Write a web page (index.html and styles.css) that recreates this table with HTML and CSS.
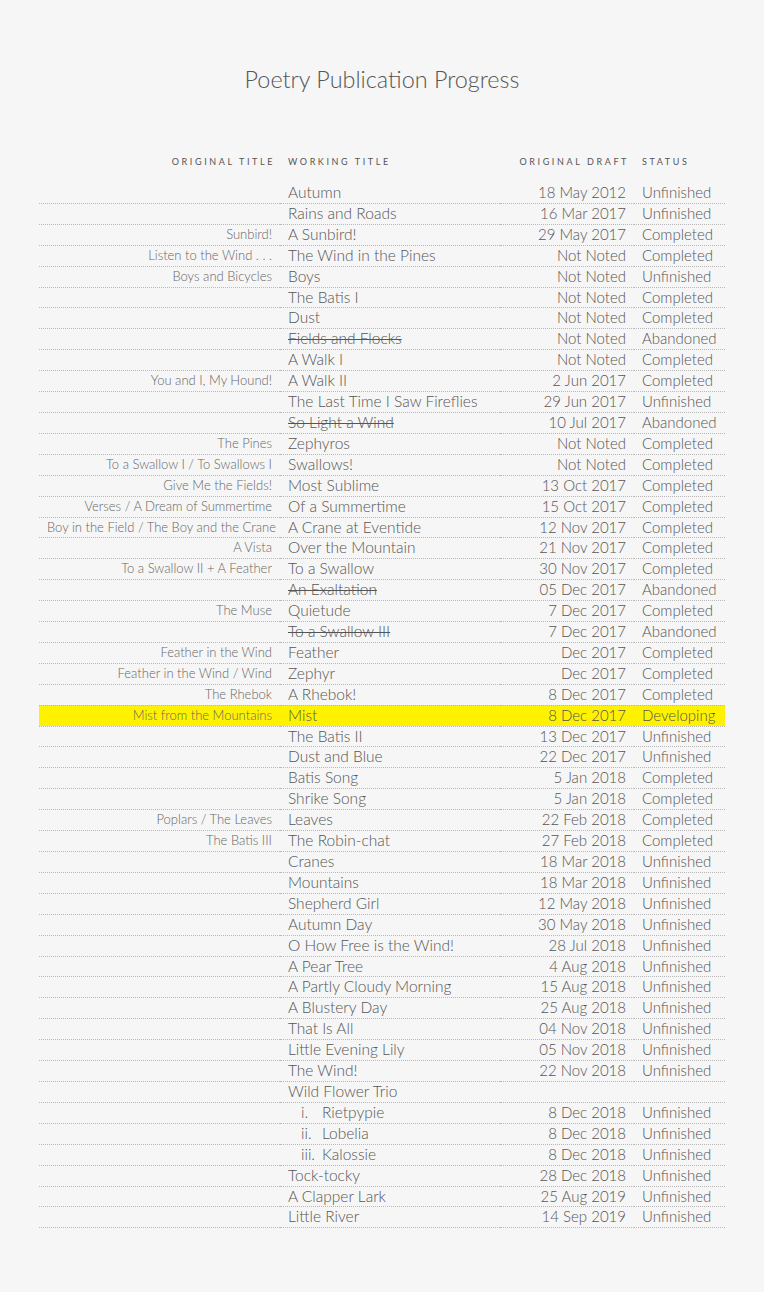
FILE: index.html
```html
<!DOCTYPE html>
<html lang="en">
<head>
<meta charset="utf-8">
<title>Poetry Publication Progress</title>
<link rel="stylesheet" href="styles.css">
</head>
<body>
<main class="page">
  <h1 class="title">Poetry Publication Progress</h1>
  <table class="progress">
    <colgroup>
      <col class="c-orig"><col class="c-work"><col class="c-date"><col class="c-status">
    </colgroup>
    <thead>
      <tr>
        <th class="orig">Original Title</th>
        <th class="work">Working Title</th>
        <th class="date">Original Draft</th>
        <th class="status">Status</th>
      </tr>
    </thead>
    <tbody>
      <tr><td class="orig"></td><td class="work">Autumn</td><td class="date">18 May 2012</td><td class="status">Unfinished</td></tr>
      <tr><td class="orig"></td><td class="work">Rains and Roads</td><td class="date">16 Mar 2017</td><td class="status">Unfinished</td></tr>
      <tr><td class="orig">Sunbird!</td><td class="work">A Sunbird!</td><td class="date">29 May 2017</td><td class="status">Completed</td></tr>
      <tr><td class="orig">Listen to the Wind . . .</td><td class="work">The Wind in the Pines</td><td class="date">Not Noted</td><td class="status">Completed</td></tr>
      <tr><td class="orig">Boys and Bicycles</td><td class="work">Boys</td><td class="date">Not Noted</td><td class="status">Unfinished</td></tr>
      <tr><td class="orig"></td><td class="work">The Batis I</td><td class="date">Not Noted</td><td class="status">Completed</td></tr>
      <tr><td class="orig"></td><td class="work">Dust</td><td class="date">Not Noted</td><td class="status">Completed</td></tr>
      <tr><td class="orig"></td><td class="work"><s>Fields and Flocks</s></td><td class="date">Not Noted</td><td class="status">Abandoned</td></tr>
      <tr><td class="orig"></td><td class="work">A Walk I</td><td class="date">Not Noted</td><td class="status">Completed</td></tr>
      <tr><td class="orig">You and I, My Hound!</td><td class="work">A Walk II</td><td class="date">2 Jun 2017</td><td class="status">Completed</td></tr>
      <tr><td class="orig"></td><td class="work">The Last Time I Saw Fireflies</td><td class="date">29 Jun 2017</td><td class="status">Unfinished</td></tr>
      <tr><td class="orig"></td><td class="work"><s>So Light a Wind</s></td><td class="date">10 Jul 2017</td><td class="status">Abandoned</td></tr>
      <tr><td class="orig">The Pines</td><td class="work">Zephyros</td><td class="date">Not Noted</td><td class="status">Completed</td></tr>
      <tr><td class="orig">To a Swallow I / To Swallows I</td><td class="work">Swallows!</td><td class="date">Not Noted</td><td class="status">Completed</td></tr>
      <tr><td class="orig">Give Me the Fields!</td><td class="work">Most Sublime</td><td class="date">13 Oct 2017</td><td class="status">Completed</td></tr>
      <tr><td class="orig">Verses / A Dream of Summertime</td><td class="work">Of a Summertime</td><td class="date">15 Oct 2017</td><td class="status">Completed</td></tr>
      <tr><td class="orig">Boy in the Field / The Boy and the Crane</td><td class="work">A Crane at Eventide</td><td class="date">12 Nov 2017</td><td class="status">Completed</td></tr>
      <tr><td class="orig">A Vista</td><td class="work">Over the Mountain</td><td class="date">21 Nov 2017</td><td class="status">Completed</td></tr>
      <tr><td class="orig">To a Swallow II + A Feather</td><td class="work">To a Swallow</td><td class="date">30 Nov 2017</td><td class="status">Completed</td></tr>
      <tr><td class="orig"></td><td class="work"><s>An Exaltation</s></td><td class="date">05 Dec 2017</td><td class="status">Abandoned</td></tr>
      <tr><td class="orig">The Muse</td><td class="work">Quietude</td><td class="date">7 Dec 2017</td><td class="status">Completed</td></tr>
      <tr><td class="orig"></td><td class="work"><s>To a Swallow III</s></td><td class="date">7 Dec 2017</td><td class="status">Abandoned</td></tr>
      <tr><td class="orig">Feather in the Wind</td><td class="work">Feather</td><td class="date">Dec 2017</td><td class="status">Completed</td></tr>
      <tr><td class="orig">Feather in the Wind / Wind</td><td class="work">Zephyr</td><td class="date">Dec 2017</td><td class="status">Completed</td></tr>
      <tr><td class="orig">The Rhebok</td><td class="work">A Rhebok!</td><td class="date">8 Dec 2017</td><td class="status">Completed</td></tr>
      <tr class="current"><td class="orig">Mist from the Mountains</td><td class="work">Mist</td><td class="date">8 Dec 2017</td><td class="status">Developing</td></tr>
      <tr><td class="orig"></td><td class="work">The Batis II</td><td class="date">13 Dec 2017</td><td class="status">Unfinished</td></tr>
      <tr><td class="orig"></td><td class="work">Dust and Blue</td><td class="date">22 Dec 2017</td><td class="status">Unfinished</td></tr>
      <tr><td class="orig"></td><td class="work">Batis Song</td><td class="date">5 Jan 2018</td><td class="status">Completed</td></tr>
      <tr><td class="orig"></td><td class="work">Shrike Song</td><td class="date">5 Jan 2018</td><td class="status">Completed</td></tr>
      <tr><td class="orig">Poplars / The Leaves</td><td class="work">Leaves</td><td class="date">22 Feb 2018</td><td class="status">Completed</td></tr>
      <tr><td class="orig">The Batis III</td><td class="work">The Robin-chat</td><td class="date">27 Feb 2018</td><td class="status">Completed</td></tr>
      <tr><td class="orig"></td><td class="work">Cranes</td><td class="date">18 Mar 2018</td><td class="status">Unfinished</td></tr>
      <tr><td class="orig"></td><td class="work">Mountains</td><td class="date">18 Mar 2018</td><td class="status">Unfinished</td></tr>
      <tr><td class="orig"></td><td class="work">Shepherd Girl</td><td class="date">12 May 2018</td><td class="status">Unfinished</td></tr>
      <tr><td class="orig"></td><td class="work">Autumn Day</td><td class="date">30 May 2018</td><td class="status">Unfinished</td></tr>
      <tr><td class="orig"></td><td class="work">O How Free is the Wind!</td><td class="date">28 Jul 2018</td><td class="status">Unfinished</td></tr>
      <tr><td class="orig"></td><td class="work">A Pear Tree</td><td class="date">4 Aug 2018</td><td class="status">Unfinished</td></tr>
      <tr><td class="orig"></td><td class="work">A Partly Cloudy Morning</td><td class="date">15 Aug 2018</td><td class="status">Unfinished</td></tr>
      <tr><td class="orig"></td><td class="work">A Blustery Day</td><td class="date">25 Aug 2018</td><td class="status">Unfinished</td></tr>
      <tr><td class="orig"></td><td class="work">That Is All</td><td class="date">04 Nov 2018</td><td class="status">Unfinished</td></tr>
      <tr><td class="orig"></td><td class="work">Little Evening Lily</td><td class="date">05 Nov 2018</td><td class="status">Unfinished</td></tr>
      <tr><td class="orig"></td><td class="work">The Wind!</td><td class="date">22 Nov 2018</td><td class="status">Unfinished</td></tr>
      <tr><td class="orig"></td><td class="work">Wild Flower Trio</td><td class="date"></td><td class="status"></td></tr>
      <tr><td class="orig"></td><td class="work"><span class="num">i.</span>Rietpypie</td><td class="date">8 Dec 2018</td><td class="status">Unfinished</td></tr>
      <tr><td class="orig"></td><td class="work"><span class="num">ii.</span>Lobelia</td><td class="date">8 Dec 2018</td><td class="status">Unfinished</td></tr>
      <tr><td class="orig"></td><td class="work"><span class="num">iii.</span>Kalossie</td><td class="date">8 Dec 2018</td><td class="status">Unfinished</td></tr>
      <tr><td class="orig"></td><td class="work">Tock-tocky</td><td class="date">28 Dec 2018</td><td class="status">Unfinished</td></tr>
      <tr><td class="orig"></td><td class="work">A Clapper Lark</td><td class="date">25 Aug 2019</td><td class="status">Unfinished</td></tr>
      <tr><td class="orig"></td><td class="work">Little River</td><td class="date">14 Sep 2019</td><td class="status">Unfinished</td></tr>
    </tbody>
  </table>
</main>
</body>
</html>
```
FILE: styles.css
```css
html, body {
  margin: 0;
  padding: 0;
  background: #f6f6f6;
}

body {
  font-family: Lato, "Open Sans", sans-serif;
  font-weight: 300;
  color: #555;
}

.page {
  width: 686px;
  margin: 0 auto;
  padding-top: 64px;
}

.title {
  margin: 0;
  text-align: center;
  font-size: 23.4px;
  font-weight: 300;
  line-height: 30px;
  color: #555;
}

.progress {
  width: 686px;
  margin-top: 60px;
  border-collapse: collapse;
  table-layout: fixed;
}

.c-orig { width: 241px; }
.c-work { width: 220px; }
.c-date { width: 134px; }
.c-status { width: 91px; }

.progress th {
  padding: 0 8px 13px;
  font-size: 9px;
  font-weight: 400;
  letter-spacing: 2.6px;
  text-transform: uppercase;
  line-height: 16px;
  color: #555;
  text-align: left;
}

.progress th.orig,
.progress th.date {
  text-align: right;
}

.progress th.orig { padding-right: 5px; }
.progress th.date { padding-right: 5px; }

.progress td {
  padding: 0 8px;
  height: 19.9px;
  line-height: 19.9px;
  border-bottom: 1px dotted #b8b8b8;
  font-size: 15.5px;
  white-space: nowrap;
  overflow: visible;
}

.progress td.orig {
  text-align: right;
  font-size: 13px;
  color: #666;
}

.progress td.date {
  text-align: right;
  font-size: 15px;
}

.progress td.status {
  font-size: 15px;
}

.progress s {
  text-decoration-thickness: 1px;
}

.num {
  display: inline-block;
  width: 21px;
  padding-left: 13px;
}

.progress tr.current td {
  background: #fff200;
}
```
